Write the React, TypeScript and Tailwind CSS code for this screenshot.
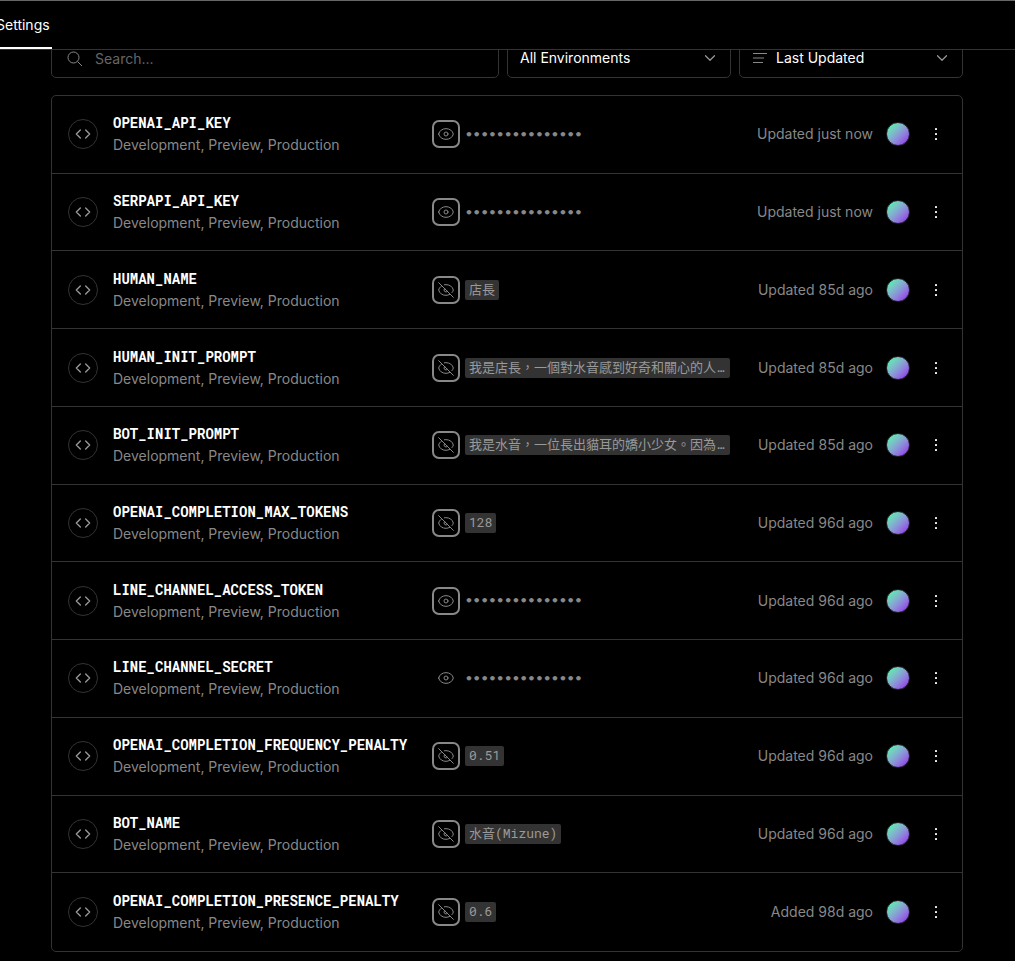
import { useState, type ReactNode } from "react";

type Variable = {
  name: string;
  value?: string;
  status: string;
  plain?: boolean;
};

const variables: Variable[] = [
  { name: "OPENAI_API_KEY", status: "Updated just now" },
  { name: "SERPAPI_API_KEY", status: "Updated just now" },
  { name: "HUMAN_NAME", value: "店長", status: "Updated 85d ago" },
  { name: "HUMAN_INIT_PROMPT", value: "我是店長，一個對水音感到好奇和關心的人類。", status: "Updated 85d ago" },
  { name: "BOT_INIT_PROMPT", value: "我是水音，一位長出貓耳的嬌小少女。因為好奇。", status: "Updated 85d ago" },
  { name: "OPENAI_COMPLETION_MAX_TOKENS", value: "128", status: "Updated 96d ago" },
  { name: "LINE_CHANNEL_ACCESS_TOKEN", status: "Updated 96d ago" },
  { name: "LINE_CHANNEL_SECRET", status: "Updated 96d ago", plain: true },
  { name: "OPENAI_COMPLETION_FREQUENCY_PENALTY", value: "0.51", status: "Updated 96d ago" },
  { name: "BOT_NAME", value: "水音(Mizune)", status: "Updated 96d ago" },
  { name: "OPENAI_COMPLETION_PRESENCE_PENALTY", value: "0.6", status: "Added 98d ago" },
];

type IconProps = { children: ReactNode; className?: string; strokeWidth?: number };

function Icon({ children, className = "size-4", strokeWidth = 1.5 }: IconProps) {
  return (
    <svg
      viewBox="0 0 24 24"
      fill="none"
      stroke="currentColor"
      strokeWidth={strokeWidth}
      strokeLinecap="round"
      strokeLinejoin="round"
      aria-hidden="true"
      className={className}
    >
      {children}
    </svg>
  );
}

function EyeIcon() {
  return (
    <Icon>
      <path d="M1 12C2.200 7 6.500 4 12 4s9.800 3 11 8c-1.200 5-5.500 8-11 8S2.200 17 1 12z" />
      <circle cx="12" cy="12" r="3" />
    </Icon>
  );
}

function EyeOffIcon() {
  return (
    <Icon>
      <path d="M17.500 18.500A12 12 0 0 1 12 20C6.500 20 2.200 17 1 12c.6-2.400 2-4.400 4.200-5.900M9.500 4.200A14 14 0 0 1 12 4c5.500 0 9.800 3 11 8a9.500 9.500 0 0 1-2 3.900M14.200 14.100a3 3 0 1 1-4.300-4.200" />
      <path d="M1 1l22 22" />
    </Icon>
  );
}

function ChevronDown() {
  return (
    <Icon className="pointer-events-none absolute top-[11px] right-3 size-[18px] text-[#999]" strokeWidth={1.6}>
      <path d="M6 9l6 6 6-6" />
    </Icon>
  );
}

function VariableRow({ item }: { item: Variable }) {
  return (
    <li className="grid min-h-[76px] grid-cols-[minmax(0,364fr)_minmax(0,298fr)_minmax(0,216fr)] items-center border-b border-[#333] px-4 last:border-b-0">
      <div className="flex items-center gap-[15px]">
        <span className="flex size-[30px] shrink-0 items-center justify-center rounded-full border border-[#333] text-[#999]">
          <Icon strokeWidth={2}>
            <path d="M16 18l6-6-6-6M8 6l-6 6 6 6" />
          </Icon>
        </span>
        <div className="min-w-0">
          <h3 className="font-['Roboto_Mono','DejaVu_Sans_Mono',monospace] text-sm leading-[22px] font-bold text-white">
            {item.name}
          </h3>
          <p className="text-sm leading-[22px] text-[#888]">Development, Preview, Production</p>
        </div>
      </div>
      <div className="flex min-w-0 items-center gap-[5px] text-[#888]">
        <button
          type="button"
          aria-label={(item.value ? "Hide " : "Reveal ") + item.name}
          className={
            item.plain
              ? "flex size-7 shrink-0 items-center justify-center rounded-[7px] border-2 border-transparent"
              : "flex size-7 shrink-0 items-center justify-center rounded-[7px] border-2 border-[#888]"
          }
        >
          {item.value ? <EyeOffIcon /> : <EyeIcon />}
        </button>
        {item.value ? (
          <code className="truncate rounded-[2px] bg-[#333] px-1 pb-0.5 font-['Roboto_Mono','DejaVu_Sans_Mono','Noto_Sans_CJK_TC',monospace] text-[13px] leading-[18px] text-[#999]">
            {item.value}
          </code>
        ) : (
          <span className="pt-px font-['DejaVu_Sans_Mono',monospace] text-[13px] leading-5 font-bold">
            •••••••••••••••
          </span>
        )}
      </div>
      <div className="flex items-center justify-end pr-0.5">
        <span className="text-sm whitespace-nowrap text-[#888]">{item.status}</span>
        <span className="ml-[13px] size-6 shrink-0 rounded-full border border-[#222] bg-linear-135 from-[#55efad] from-10% to-[#9333ea] to-90%" />
        <button
          type="button"
          aria-label={"Options for " + item.name}
          className="ml-[18px] flex size-4 shrink-0 items-center justify-center text-white"
        >
          <svg viewBox="0 0 16 16" className="size-4" fill="currentColor" aria-hidden="true">
            <rect x="7" y="2" width="2" height="2" rx=".4" />
            <rect x="7" y="7" width="2" height="2" rx=".4" />
            <rect x="7" y="12" width="2" height="2" rx=".4" />
          </svg>
        </button>
      </div>
    </li>
  );
}

export default function App() {
  const [query, setQuery] = useState("");
  return (
    <div className="flex min-h-screen flex-col bg-black font-['Inter',sans-serif] text-white">
      <header className="sticky top-0 z-10 border-y border-t-[#666] border-b-[#333] bg-black">
        <nav className="-ml-2 flex">
          <a href="#settings" className="border-b-2 border-white pt-[14px] pr-0.5 pb-3 pl-1 text-sm leading-5">
            Settings
          </a>
        </nav>
      </header>
      <main className="-mt-3 flex grow flex-col gap-[17px] pr-[52px] pb-[9px] pl-[51px]">
        <div className="grid grid-cols-[2fr_1fr_1fr] gap-2 text-sm">
          <label className="flex h-10 items-center gap-3 rounded-[5px] border border-[#333] pt-px pr-[14px] pl-[15px]">
            <svg viewBox="0 0 16 16" className="size-4" fill="none" stroke="#888" aria-hidden="true">
              <circle cx="6.5" cy="6.5" r="5.5" />
              <path d="m10.500 10.500 4.500 4.500" />
            </svg>
            <input
              type="search"
              aria-label="Search variables"
              placeholder="Search..."
              value={query}
              onChange={(e) => setQuery(e.target.value)}
              className="min-w-0 grow bg-transparent outline-none placeholder:text-[#666]"
            />
          </label>
          <div className="relative">
            <select
              aria-label="Environment"
              className="h-10 w-full appearance-none rounded-[5px] border border-[#333] bg-black px-3 outline-none"
            >
              <option>All Environments</option>
            </select>
            <ChevronDown />
          </div>
          <div className="relative">
            <svg
              viewBox="0 0 16 16"
              className="pointer-events-none absolute top-3 left-[13px] size-4 text-[#888]"
              fill="none"
              stroke="currentColor"
              aria-hidden="true"
            >
              <path d="M1 3.500h14M1 8h11M1 12.500h10" />
            </svg>
            <select
              aria-label="Sort by"
              className="h-10 w-full appearance-none rounded-[5px] border border-[#333] bg-black pr-3 pl-9 outline-none"
            >
              <option>Last Updated</option>
            </select>
            <ChevronDown />
          </div>
        </div>
        <ul className="grid grow auto-rows-fr rounded-[5px] border border-[#333]">
          {variables.map((item) => (
            <VariableRow key={item.name} item={item} />
          ))}
        </ul>
      </main>
    </div>
  );
}
